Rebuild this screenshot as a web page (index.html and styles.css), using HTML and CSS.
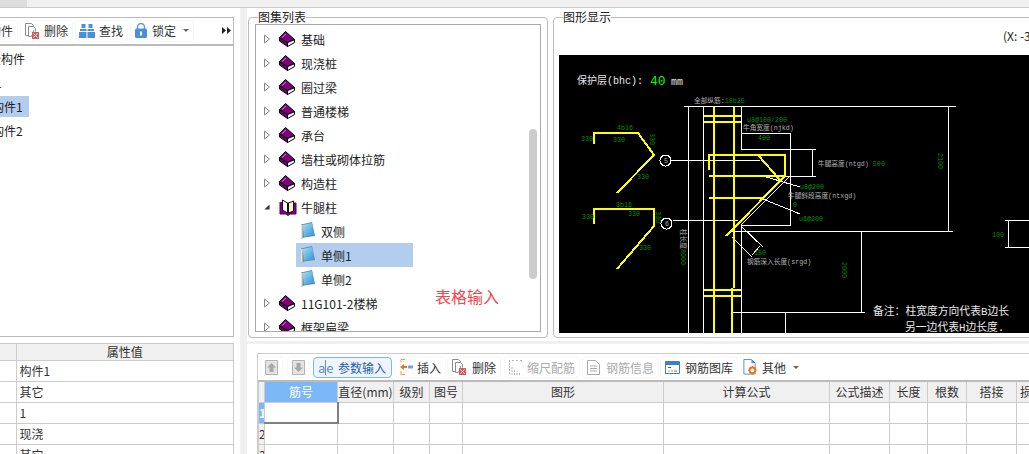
FILE: index.html
```html
<!DOCTYPE html>
<html lang="en">
<head>
  <meta charset="UTF-8">
  <meta name="viewport" content="width=device-width, initial-scale=1.0">
  <title>图集列表</title>
  <link rel="stylesheet" href="styles.css">
</head>
<body>

  <!-- Shared icons -->
  <svg class="sprites" aria-hidden="true">
    <symbol id="arrow-closed" viewBox="0 0 6 10"><path d="M.5 1v8L5.500 5z" fill="#fff" stroke="#8a8a8a"/></symbol>
    <symbol id="arrow-open" viewBox="0 0 7 7"><path d="M6.500.5v6H.5z" fill="#333"/></symbol>
    <symbol id="more" viewBox="0 0 9 7"><path d="M0 0v7l4-3.500zM5 0v7l4-3.500z" fill="#222"/></symbol>
    <symbol id="book" viewBox="0 0 16 16">
      <path d="M8.500 11.500 15.500 8.500v3l-7 4z" fill="#fff" stroke="#000"/>
      <path d="M.5 6.500v3.500l8 5.500v-4z" fill="#6a006a" stroke="#000"/>
      <path d="M.5 6.500 6.500.5l9 8-7 3z" fill="#800080" stroke="#000"/>
      <path d="M3 6.500 7 3" stroke="#c890c8" fill="none"/>
    </symbol>
    <symbol id="book-open" viewBox="0 0 18 17">
      <path d="M1 3v12h6l2 1.500 2-1.500h6V4h-2" fill="#800080" stroke="#4a004a"/>
      <path d="M3.500 1 8.500 4v10l-5-3z" fill="#fff" stroke="#111"/>
      <path d="M14.500 2 9.500 4v10l5-2z" fill="#fbf3c8" stroke="#111"/>
    </symbol>
    <linearGradient id="page-fill" x1="0" y1="0" x2="1" y2="1">
      <stop offset="0" stop-color="#a8e0f4"/>
      <stop offset="1" stop-color="#2f8fd8"/>
    </linearGradient>
    <symbol id="page" viewBox="0 0 14 18">
      <path d="M0 2.500 11 0l3 14-11 1.500L.500 17z" fill="#5f8fa8"/>
      <path d="M1.500 3 11 1l2.500 12-10.500 1.500z" fill="url(#page-fill)"/>
      <path d="M0 3h1.500v13.500H0z" fill="#e8e4c8"/>
    </symbol>
    <symbol id="ico-del" viewBox="0 0 14 16">
      <path d="M.5.500h6l2 2v10h-8z" fill="#fff" stroke="#8c8c8c"/>
      <path d="M3.500 3.500h5l2 2v3M3.500 3.500v10h3" fill="#fff" stroke="#8c8c8c"/>
      <path d="M7 9h7v7H7z" fill="#d9595b"/>
      <path d="m8.500 10.500 4 4m0-4-4 4" stroke="#fff"/>
    </symbol>
    <symbol id="ico-find" viewBox="0 0 16 14">
      <path d="M2.500 0h4v4h-4zM9.500 0h4v4h-4zM1 5h6.500v2H1zM8.500 5H15v2H8.500zM0 8h7.500v6H0zM8.500 8H16v6H8.500z" fill="#4a8fdc"/>
    </symbol>
    <symbol id="ico-lock" viewBox="0 0 12 15">
      <path d="M2.500 6V4a3.500 3.500 0 0 1 7 0v2" fill="none" stroke="#5b9be6" stroke-width="1.500"/>
      <rect y="5.500" width="12" height="9.500" rx="1.500" fill="#4a8fdc"/>
      <path d="M5 8.500h2v4H5z" fill="#fff"/>
    </symbol>
    <symbol id="ico-up" viewBox="0 0 13 15">
      <path d="M.5.500h12v14H.5z" fill="#e4e4e4" stroke="#b4b4b4"/>
      <path d="M6.500 3 11 7.500H8.500V12h-4V7.500H2z" fill="#a8a8a8"/>
    </symbol>
    <symbol id="ico-down" viewBox="0 0 13 15">
      <path d="M.5.500h12v14H.5z" fill="#e4e4e4" stroke="#b4b4b4"/>
      <path d="M6.500 12 11 7.500H8.500V3h-4v4.500H2z" fill="#a8a8a8"/>
    </symbol>
    <symbol id="ico-insert" viewBox="0 0 14 16">
      <path d="M6 .5h-4v3M2 12v3.500h4" fill="none" stroke="#e8a050"/>
      <path d="M1 8l4-3v2h3v2H5v2z" fill="#e07a1f"/>
      <path d="M9 6.500h5v3H9z" fill="#6aa6e8"/>
    </symbol>
    <symbol id="ico-shrink" viewBox="0 0 13 15" fill="none" stroke="#b8b8b8">
      <path d="M.5 0v15M3 15V7M5.500 15V9M8 15v-4M10.500 15v-2M3 .5h2M7 .5h2M11 .5h2M12.500 0v3" stroke-dasharray="2 1"/>
    </symbol>
    <symbol id="ico-info" viewBox="0 0 13 15">
      <path d="M.5.500h8l4 4v10H.5z" fill="#fff" stroke="#aaa"/>
      <path d="M3 6h7M3 8.500h7M3 11h7" stroke="#aaa"/>
    </symbol>
    <symbol id="ico-lib" viewBox="0 0 15 13">
      <path d="M.5.500h14v12H.5z" fill="#fff" stroke="#3f7fc8"/>
      <path d="M1 1h13v3H1z" fill="#3f7fc8"/>
      <path d="M3 6.500h3" stroke="#555"/>
      <path d="M3 10h2" stroke="#e0a030"/>
      <path d="M6 10h2" stroke="#60b060"/>
      <path d="M9 10h3" stroke="#d05050"/>
    </symbol>
    <symbol id="ico-other" viewBox="0 0 14 17">
      <path d="M.5.500h8l4 4V16H.5z" fill="#fff" stroke="#4a8fdc"/>
      <path d="M8.500.5v4h4z" fill="#4a8fdc"/>
      <circle cx="9.500" cy="12" r="3" fill="none" stroke="#e8791e" stroke-width="2"/>
      <path d="M9.500 7.500v2M9.500 14.500v2M5 12h2M12 12h2M6.500 9l1 1M11.500 14l1 1M12.500 9l-1 1M7.500 14l-1 1" stroke="#e8791e" stroke-width="1.500"/>
    </symbol>
  </svg>

  <!-- Tab strip -->
  <div class="tab-strip"><div class="tab-active"></div></div>

  <div class="workspace">

    <!-- Left column: component list and properties -->
    <div class="left-pane">
      <div class="left-panel">
        <div class="toolbar left-toolbar">
          <span class="tool tool-cut">构件</span>
          <span class="tool tool-del-left"><svg class="icon-14"><use href="#ico-del"/></svg>删除</span>
          <span class="tool tool-find"><svg class="icon-16"><use href="#ico-find"/></svg>查找</span>
          <span class="tool tool-lock"><svg class="icon-12"><use href="#ico-lock"/></svg>锁定<i class="caret"></i></span>
          <svg class="more"><use href="#more"/></svg>
        </div>
        <ul class="left-tree">
          <li class="left-row row-a">全构件</li>
          <li class="left-row row-b">1</li>
          <li class="left-row row-c"><span class="left-selected">构件1</span></li>
          <li class="left-row row-c">构件2</li>
        </ul>
      </div>
      <table class="prop-table">
        <colgroup><col class="prop-name"><col></colgroup>
        <tr><th></th><th>属性值</th></tr>
        <tr><td></td><td>构件1</td></tr>
        <tr><td></td><td>其它</td></tr>
        <tr><td></td><td>1</td></tr>
        <tr><td></td><td>现浇</td></tr>
        <tr><td></td><td>其它</td></tr>
      </table>
    </div>

    <div class="splitter-v"></div>

    <!-- Right column -->
    <div class="right-pane">
      <div class="top-row">

        <!-- Atlas list -->
        <fieldset class="group group-list">
          <legend>图集列表</legend>
          <div class="tree-box">
            <ul class="tree">
              <li class="tree-row"><svg class="tree-arrow"><use href="#arrow-closed"/></svg><svg class="tree-book"><use href="#book"/></svg>基础</li>
              <li class="tree-row"><svg class="tree-arrow"><use href="#arrow-closed"/></svg><svg class="tree-book"><use href="#book"/></svg>现浇桩</li>
              <li class="tree-row"><svg class="tree-arrow"><use href="#arrow-closed"/></svg><svg class="tree-book"><use href="#book"/></svg>圈过梁</li>
              <li class="tree-row"><svg class="tree-arrow"><use href="#arrow-closed"/></svg><svg class="tree-book"><use href="#book"/></svg>普通楼梯</li>
              <li class="tree-row"><svg class="tree-arrow"><use href="#arrow-closed"/></svg><svg class="tree-book"><use href="#book"/></svg>承台</li>
              <li class="tree-row"><svg class="tree-arrow"><use href="#arrow-closed"/></svg><svg class="tree-book"><use href="#book"/></svg>墙柱或砌体拉筋</li>
              <li class="tree-row"><svg class="tree-arrow"><use href="#arrow-closed"/></svg><svg class="tree-book"><use href="#book"/></svg>构造柱</li>
              <li class="tree-row"><svg class="tree-arrow"><use href="#arrow-open"/></svg><svg class="tree-book book-wide"><use href="#book-open"/></svg>牛腿柱</li>
              <li class="tree-child"><svg class="tree-page"><use href="#page"/></svg>双侧</li>
              <li class="tree-child tree-selected"><svg class="tree-page"><use href="#page"/></svg>单侧1</li>
              <li class="tree-child"><svg class="tree-page"><use href="#page"/></svg>单侧2</li>
              <li class="tree-row"><svg class="tree-arrow"><use href="#arrow-closed"/></svg><svg class="tree-book"><use href="#book"/></svg>11G101-2楼梯</li>
              <li class="tree-row"><svg class="tree-arrow"><use href="#arrow-closed"/></svg><svg class="tree-book"><use href="#book"/></svg>框架扁梁</li>
            </ul>
            <div class="tree-scroll"></div>
            <div class="table-note">表格输入</div>
          </div>
        </fieldset>

        <!-- Drawing -->
        <fieldset class="group group-drawing">
          <legend>图形显示</legend>
          <div class="coords">(X: -3</div>
          <svg class="cad" viewBox="559 55 470 278">
            <!-- white dimension lines -->
            <path class="cad-line" d="M684 106.500H956M688.500 107V333M703.500 107V333M741.500 107V149.500H816M742 133.500H791M790.500 133V225M784 176.500H816M812.500 150V176M948.500 107V231M741 225.500H790.500M732 231.500H953M741.500 225V333M861.500 231V312M733 312.500H865M785.500 312V333M1005 220.500H1029M1005 247.500H1029M1008.500 220V247"/>
            <path class="cad-line" d="M741 225 790 176M671 160.500H760M673 220.500H738M763 176 800 187M763 199 800 214M741 226 763 247M732 237 752 257M752 255 760 246"/>
            <circle class="cad-line" cx="665.500" cy="160.500" r="5.500"/>
            <circle class="cad-line" cx="666.500" cy="223.500" r="5.500"/>
            <!-- yellow rebar -->
            <path class="cad-bar" d="M594 144V133H638L654 155 617 193M594 224V209H654V226L617 269"/>
            <path class="cad-bar" d="M714 107V333M734 107V288M732 288V333M704 116H741M704 122H741M704 290H741M704 296H741"/>
            <path class="cad-bar" d="M709 170V155H785V176L726 236M709 176H785M709 198H762M758 155 780 180"/>
            <!-- labels -->
            <text class="cad-label cad-big" x="577" y="84">保护层(bhc):</text>
            <text class="cad-value" x="650" y="85">40</text>
            <text class="cad-label cad-mm" x="671" y="85">mm</text>
            <text class="cad-gray" x="694" y="103">全部纵筋:<tspan class="cad-dim">18b25</tspan></text>
            <text class="cad-dim" x="617" y="130">4b16</text>
            <text class="cad-dim" x="581" y="141">330</text>
            <text class="cad-dim" x="613" y="142">330</text>
            <text class="cad-dim" transform="translate(650 133) rotate(90)">330</text>
            <text class="cad-dim" x="637" y="179">330</text>
            <text class="cad-dim" x="616" y="207">3b16</text>
            <text class="cad-dim" x="582" y="219">330</text>
            <text class="cad-dim" x="628" y="216">330</text>
            <text class="cad-dim" transform="translate(656 211) rotate(90)">330</text>
            <text class="cad-dim" x="639" y="250">330</text>
            <text class="cad-dim" x="747" y="122">u8@100/200</text>
            <text class="cad-gray" x="743" y="130">牛角宽度(njkd)</text>
            <text class="cad-dim" x="758" y="140">400</text>
            <text class="cad-gray" x="818" y="166">牛腿高度(ntgd)<tspan class="cad-dim"> 500</tspan></text>
            <text class="cad-dim" transform="translate(938 153) rotate(90)">2100</text>
            <text class="cad-dim" x="800" y="189">u8@200</text>
            <text class="cad-gray" x="788" y="198">牛腿斜段高度(ntxgd)</text>
            <text class="cad-dim" x="793" y="207">0</text>
            <text class="cad-dim" x="799" y="221">u6@200</text>
            <text class="cad-gray" transform="translate(681 229) rotate(90)">柱长度<tspan class="cad-dim">8000</tspan></text>
            <text class="cad-dim" x="754" y="255">150</text>
            <text class="cad-gray" x="747" y="264">钢筋深入长度(srgd)</text>
            <text class="cad-dim" transform="translate(842 262) rotate(90)">2000</text>
            <text class="cad-dim" x="992" y="237">100</text>
            <text class="cad-label cad-note" x="873" y="315">备注：柱宽度方向代表B边长</text>
            <text class="cad-label cad-note" x="905" y="331">另一边代表H边长度.</text>
            <text class="cad-gray" x="664" y="163">5</text>
            <text class="cad-gray" x="665" y="226">6</text>
          </svg>
        </fieldset>

      </div>

      <div class="splitter-h"></div>

      <!-- Rebar table -->
      <div class="bottom-row">
        <div class="rebar-box">
          <div class="toolbar rebar-toolbar">
            <span class="tool tool-up"><svg class="icon-13"><use href="#ico-up"/></svg></span>
            <span class="tool tool-down"><svg class="icon-13"><use href="#ico-down"/></svg></span>
            <span class="tool tool-param"><span class="ae">a<i></i>e</span>参数输入</span>
            <span class="tool tool-insert"><svg class="icon-14"><use href="#ico-insert"/></svg>插入</span>
            <span class="tool tool-del"><svg class="icon-14"><use href="#ico-del"/></svg>删除</span>
            <span class="tool tool-shrink tool-off"><svg class="icon-13"><use href="#ico-shrink"/></svg>缩尺配筋</span>
            <span class="tool tool-info tool-off"><svg class="icon-13"><use href="#ico-info"/></svg>钢筋信息</span>
            <span class="tool tool-lib"><svg class="icon-15"><use href="#ico-lib"/></svg>钢筋图库</span>
            <span class="tool tool-other"><svg class="icon-14"><use href="#ico-other"/></svg>其他<i class="caret"></i></span>
          </div>
          <table class="rebar-table">
            <colgroup>
              <col class="c-no"><col class="c-id"><col class="c-dia"><col class="c-grade"><col class="c-fig"><col class="c-shape"><col class="c-formula"><col class="c-desc"><col class="c-len"><col class="c-count"><col class="c-lap"><col class="c-loss">
            </colgroup>
            <tr><th></th><th class="cell-head-active">筋号</th><th>直径(mm)</th><th>级别</th><th>图号</th><th>图形</th><th>计算公式</th><th>公式描述</th><th>长度</th><th>根数</th><th>搭接</th><th>损耗(%)</th></tr>
            <tr><td class="row-no row-no-active">1</td><td class="cell-active"></td><td></td><td></td><td></td><td></td><td></td><td></td><td></td><td></td><td></td><td></td></tr>
            <tr><td class="row-no">2</td><td></td><td></td><td></td><td></td><td></td><td></td><td></td><td></td><td></td><td></td><td></td></tr>
            <tr><td class="row-no">3</td><td></td><td></td><td></td><td></td><td></td><td></td><td></td><td></td><td></td><td></td><td></td></tr>
          </table>
        </div>
      </div>
    </div>
  </div>

</body>
</html>
```

FILE: styles.css
```css
/* General Body Styling */
body {
  margin: 0;
  width: 1029px;
  height: 454px;
  overflow: hidden;
  background-color: #fff;
  color: #333;
  font-family: "Noto Sans CJK SC", sans-serif;
  font-size: 12px;
}

ul {
  list-style: none;
  margin: 0;
  padding: 0;
}

svg {
  display: block;
  flex: none;
}

.sprites {
  width: 0;
  height: 0;
  position: absolute;
}

/* Tab strip */
.tab-strip {
  height: 7px;
  background-color: #f0f0f0;
  border-bottom: 1px solid #ccc;
}

.tab-active {
  width: 27px;
  height: 7px;
  background-color: #ddd;
}

.workspace {
  display: flex;
  height: 446px;
}

/* Left column */
.left-pane {
  width: 240px;
  flex: none;
  padding-top: 9px;
  box-sizing: border-box;
  overflow: hidden;
}

.left-panel {
  width: 234px;
  height: 320px;
  box-sizing: border-box;
  border: 1px solid #bbb;
  border-left: none;
}

.toolbar {
  display: flex;
  align-items: center;
  height: 27px;
}

.left-toolbar {
  border-bottom: 2px solid #bbb;
  gap: 2px;
  padding-bottom: 1px;
  box-sizing: border-box;
  height: 28px;
}

.tool {
  display: flex;
  align-items: center;
  gap: 5px;
  height: 22px;
  box-sizing: border-box;
  flex: none;
  padding: 0 4px;
  border: 1px solid #f7f7f7;
  border-radius: 4px;
  white-space: nowrap;
}

.tool-cut {
  margin-left: -16px;
}

.tool-find {
  padding: 0 4px 0 3px;
  gap: 4px;
}

.caret {
  width: 0;
  height: 0;
  margin-left: 2px;
  border: 3px solid transparent;
  border-top: 3px solid #666;
  border-bottom: none;
}

.more {
  width: 9px;
  height: 7px;
  margin-left: auto;
  margin-right: 2px;
}

.icon-12 { width: 12px; height: 15px; }
.icon-13 { width: 13px; height: 15px; }
.icon-14 { width: 14px; height: 16px; }
.icon-15 { width: 15px; height: 13px; }
.icon-16 { width: 16px; height: 14px; }

.left-tree {
  padding-top: 1px;
  color: #222;
}

.left-row {
  height: 24px;
  line-height: 24px;
  white-space: nowrap;
  overflow: hidden;
}

.row-a { text-indent: -11px; }
.row-b { text-indent: -5px; }
.row-c { text-indent: -8px; }

.left-selected {
  display: block;
  width: 29px;
  height: 21px;
  margin-top: 1px;
  line-height: 21px;
  background-color: #b2cdee;
}

/* Properties table */
.prop-table {
  width: 234px;
  margin-top: 6px;
  table-layout: fixed;
  border-collapse: collapse;
}

.prop-name {
  width: 16px;
}

.prop-table th,
.prop-table td {
  height: 21px;
  padding: 0 0 0 3px;
  border: 1px solid #ccc;
  box-sizing: border-box;
  line-height: 16px;
  font-weight: normal;
  text-align: left;
}

.prop-table th {
  height: 16px;
  padding: 0;
  background-color: #f0f0f0;
  text-align: center;
}

.prop-table tr > :first-child {
  border-left: none;
}

/* Splitters */
.splitter-v {
  width: 7px;
  flex: none;
  background-color: #f0f0f0;
}

.splitter-h {
  height: 3px;
  background-color: #f0f0f0;
}

.right-pane {
  flex: 1;
  min-width: 0;
  overflow: hidden;
}

.top-row {
  display: flex;
  gap: 5px;
  height: 333px;
  box-sizing: border-box;
  padding: 1px 0 0 1px;
  overflow: hidden;
}

/* Group boxes */
.group {
  margin: 0;
  padding: 0;
  height: 329px;
  box-sizing: border-box;
  flex: none;
  border: 1px solid #bbb;
  border-radius: 4px;
  min-width: 0;
}

.group legend {
  margin-left: 9px;
  padding: 0;
  line-height: 16px;
  color: #222;
}

.group-list {
  width: 300px;
}

.group-drawing {
  width: 500px;
}

/* Atlas tree */
.tree-box {
  position: relative;
  width: 286px;
  height: 308px;
  margin: -1px 0 0 6px;
  box-sizing: border-box;
  border: 1px solid #aaa;
  padding-top: 2px;
  overflow: hidden;
}

.tree {
  color: #222;
}

.tree-row,
.tree-child {
  display: flex;
  align-items: center;
  height: 24px;
  white-space: nowrap;
}

.tree-row {
  padding-left: 8px;
}

.tree-arrow {
  width: 6px;
  height: 10px;
  margin-right: 9px;
}

.tree-book {
  width: 16px;
  height: 16px;
  margin-right: 6px;
}

.book-wide {
  width: 18px;
  height: 17px;
  margin-right: 4px;
}

.tree-child {
  width: 117px;
  box-sizing: border-box;
  margin-left: 40px;
  padding-left: 5px;
}

.tree-page {
  width: 14px;
  height: 18px;
  margin-right: 6px;
}

.tree-selected {
  background-color: #b2cdee;
}

.tree-scroll {
  position: absolute;
  left: 273px;
  top: 104px;
  width: 8px;
  height: 150px;
  border-radius: 4px;
  background-color: #ccc;
}

.table-note {
  position: absolute;
  left: 179px;
  top: 259px;
  font-size: 16px;
  line-height: 24px;
  color: #f5454a;
}

/* Drawing */
.coords {
  height: 30px;
  line-height: 22px;
  margin-left: 449px;
  white-space: nowrap;
  color: #222;
}

.cad {
  width: 470px;
  height: 278px;
  margin-left: 5px;
  background-color: #000;
}

.cad-line {
  fill: none;
  stroke: #fff;
  stroke-width: 1;
  shape-rendering: crispEdges;
}

.cad-bar {
  fill: none;
  stroke: #ffff00;
  stroke-width: 2;
  shape-rendering: crispEdges;
}

.cad text {
  font-family: "Liberation Mono", "Noto Sans CJK SC", monospace;
  font-size: 6.7px;
}

.cad .cad-dim {
  fill: #0b8f0b;
}

.cad .cad-gray {
  fill: #b0b0b0;
}

.cad .cad-label {
  fill: #e8e8e8;
}

.cad .cad-big {
  font-size: 10px;
}

.cad .cad-value {
  font-size: 13px;
  fill: #00ff00;
}

.cad .cad-mm {
  font-size: 10px;
}

.cad .cad-note {
  font-size: 10.8px;
}

/* Rebar table */
.bottom-row {
  height: 110px;
  padding: 9px 0 0 10px;
  box-sizing: border-box;
  overflow: hidden;
}

.rebar-box {
  width: 820px;
  border: 1px solid #ccc;
  border-right: none;
  border-bottom: none;
}

.rebar-toolbar {
  height: 26px;
  gap: 2px;
  padding-left: 2px;
}

.tool-down { margin-left: 2px; }
.tool-param {
  margin-left: 1px;
  width: 79px;
  height: 21px;
  padding-right: 0;
  border-color: #7cb8f8;
  background-color: #eef5fe;
  color: #1f5ea8;
}

.ae {
  display: flex;
  align-items: center;
  width: 15px;
  font-size: 13px;
  color: #4a8fdc;
}

.ae i {
  width: 1px;
  height: 15px;
  flex: none;
  background-color: #888;
}

.tool-insert { gap: 4px; }
.tool-del { margin-left: -1px; gap: 6px; }
.tool-shrink { margin-left: 1px; }
.tool-info { gap: 6px; }
.tool-lib { margin-left: -1px; }
.tool-other { margin-left: -2px; border-color: transparent; }

.tool-off {
  color: #aaa;
}

.rebar-table {
  width: 808px;
  table-layout: fixed;
  border-collapse: collapse;
  border-top: 2px solid #bbb;
}

.c-no { width: 6px; }
.c-id { width: 73px; }
.c-dia { width: 56px; }
.c-grade { width: 36px; }
.c-fig { width: 33px; }
.c-shape { width: 201px; }
.c-formula { width: 166px; }
.c-desc { width: 60px; }
.c-len { width: 38px; }
.c-count { width: 39px; }
.c-lap { width: 50px; }
.c-loss { width: 50px; }

.rebar-table th,
.rebar-table td {
  height: 21px;
  padding: 0;
  box-sizing: border-box;
  border: 1px solid #ccc;
  line-height: 16px;
  font-weight: normal;
  text-align: center;
  white-space: nowrap;
  overflow: hidden;
}

.rebar-table th {
  background-color: #f0f0f0;
}

.rebar-table .cell-head-active {
  background-color: #7cb8f8;
  color: #fff;
}

.rebar-table .row-no {
  background-color: #f0f0f0;
  text-align: left;
}

.rebar-table .row-no-active {
  background-color: #7cb8f8;
  color: #fff;
  font-weight: bold;
}

.rebar-table .cell-active {
  border-right: 2px solid #808080;
  border-bottom: 2px solid #808080;
}
```
